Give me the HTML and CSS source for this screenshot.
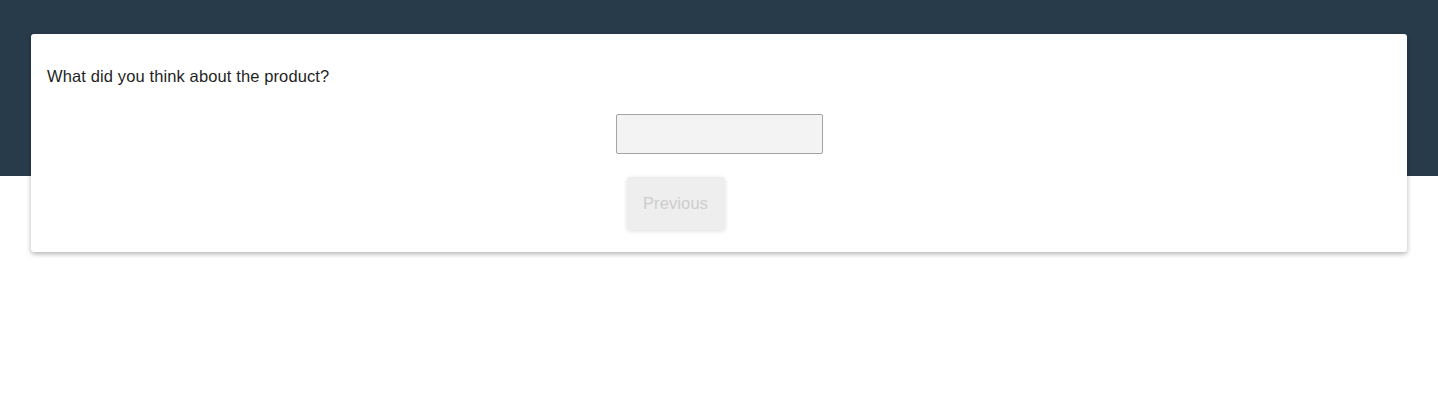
FILE: index.html
```html
<!DOCTYPE html>
<html lang="en">
<head>
<meta charset="utf-8">
<title>Survey</title>
<link rel="stylesheet" href="styles.css">
</head>
<body>
<div class="page">
  <div class="card">
    <p class="question">What did you think about the product?</p>
    <div class="answer">
      <input class="text-input" type="text" aria-label="Answer">
    </div>
    <div class="nav">
      <button class="btn" type="button" disabled>Previous</button>
      <span class="spacer"></span>
    </div>
  </div>
</div>
</body>
</html>
```
FILE: styles.css
```css
html, body {
  margin: 0;
  padding: 0;
}
body {
  background: linear-gradient(#283b4b 0, #283b4b 176px, #ffffff 176px);
  font-family: "Liberation Sans", Arial, sans-serif;
  min-height: 404px;
}
.page {
  padding: 34px 31px;
}
.card {
  background: #ffffff;
  border-radius: 3px;
  box-shadow: 0 2px 5px rgba(0, 0, 0, 0.3);
  padding: 30px 16px 22px;
}
.question {
  margin: 0;
  font-size: 16.5px;
  letter-spacing: 0.12px;
  line-height: 24px;
  color: #1f1f1f;
}
.answer {
  display: flex;
  justify-content: center;
  margin-top: 26px;
}
.text-input {
  box-sizing: border-box;
  width: 207px;
  height: 40px;
  background: #f3f3f3;
  border: 1px solid #a3a3a3;
  border-radius: 2px;
  margin: 0;
  padding: 0 8px;
  font: inherit;
}
.nav {
  display: flex;
  justify-content: center;
  margin-top: 23px;
}
.btn {
  box-sizing: border-box;
  width: 98px;
  height: 53px;
  padding: 0;
  margin: 0;
  border: none;
  border-radius: 3px;
  background: #eeeeee;
  color: #cdcdcd;
  font-family: "Liberation Sans", Arial, sans-serif;
  font-size: 16.5px;
  letter-spacing: 0.12px;
  line-height: 19px;
  box-shadow: 0 1px 4px rgba(0, 0, 0, 0.14);
}
.spacer {
  width: 87px;
}
```
